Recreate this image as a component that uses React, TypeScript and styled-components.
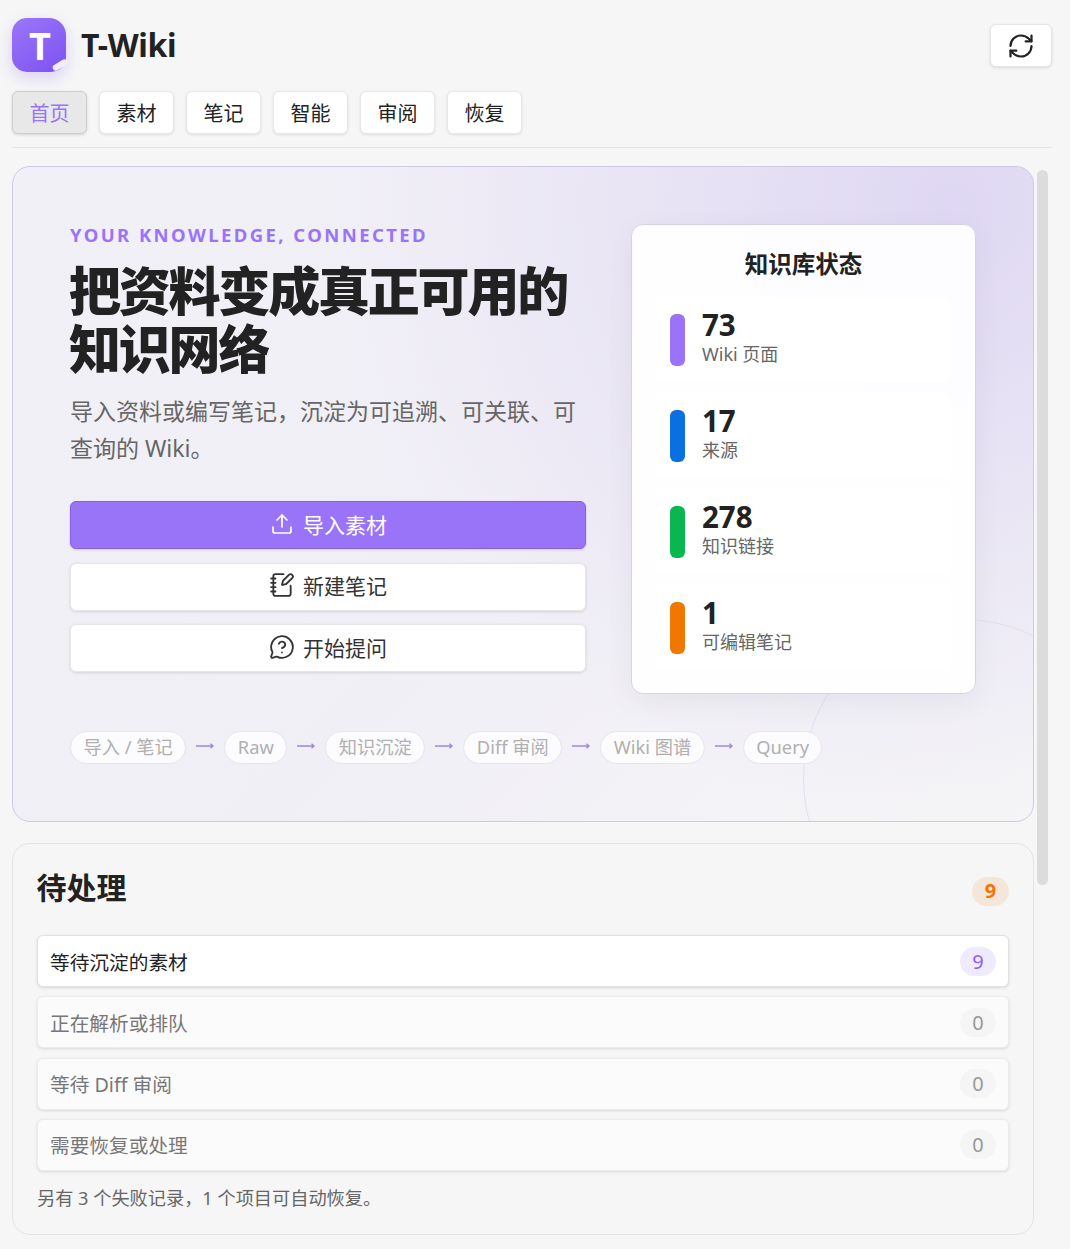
import { Fragment } from "react";
import styled, { createGlobalStyle } from "styled-components";
import { MessageCircleQuestion, NotebookPen, RefreshCw, Upload } from "lucide-react";

const GlobalStyle = createGlobalStyle`
  html, body {
    margin: 0;
    height: 100%;
    overflow: hidden;
    background: #f6f6f6;
  }
  * {
    box-sizing: border-box;
  }
  body {
    font-family: "Noto Sans", "Noto Sans CJK SC", sans-serif;
    color: #222;
  }
`;

const Page = styled.div`
  height: 1249px;
  padding: 0 12px 0 12px;
  display: flex;
  flex-direction: column;
  overflow: hidden;
`;

const Header = styled.header`
  flex: none;
  padding: 18px 6px 0 0;
  height: 91px;
  display: flex;
  align-items: flex-start;
  justify-content: space-between;
`;

const Brand = styled.div`
  display: flex;
  align-items: center;
  gap: 15px;
`;

const Logo = styled.div`
  position: relative;
  width: 54px;
  height: 54px;
  border-radius: 15px 17px 15px 15px;
  background: linear-gradient(145deg, #9b76f9, #7d52f2);
  box-shadow: 0 6px 16px rgba(125, 82, 242, 0.22);
  color: #fff;
  font-size: 38px;
  font-weight: 700;
  line-height: 54px;
  padding-left: 17px;
`;

const LogoFold = styled.span`
  position: absolute;
  right: -2px;
  bottom: 4px;
  width: 16px;
  height: 6px;
  background: #f3eefe;
  border-radius: 3px;
  transform: rotate(-32deg);
`;

const BrandName = styled.h1`
  margin: 0;
  font-size: 32px;
  font-weight: 700;
  letter-spacing: -0.35px;
  color: #222;
  line-height: 54px;
`;

const RefreshButton = styled.button`
  width: 62px;
  height: 43px;
  margin-top: 6px;
  border: 1px solid #e6e6e6;
  border-radius: 6px;
  background: #fff;
  box-shadow: 0 1px 3px rgba(0, 0, 0, 0.12);
  display: flex;
  align-items: center;
  justify-content: center;
  color: #222;
  padding: 0;
`;

const Tabs = styled.nav`
  flex: none;
  display: flex;
  gap: 12px;
  padding-bottom: 13px;
  margin-right: 6px;
  border-bottom: 1px solid #e4e4e4;
`;

const Tab = styled.button<{ $active?: boolean }>`
  width: 75px;
  height: 43px;
  padding: 0;
  border-radius: 6px;
  font: inherit;
  font-size: 20px;
  color: ${(p) => (p.$active ? "#9a74f8" : "#222")};
  background: ${(p) => (p.$active ? "#e8e8e8" : "#fff")};
  border: 1px solid ${(p) => (p.$active ? "#cfcfcf" : "#e8e8e8")};
  box-shadow: 0 1px 3px rgba(0, 0, 0, ${(p) => (p.$active ? 0.14 : 0.1)});
`;

const Body = styled.div`
  flex: 1;
  min-height: 0;
  margin-top: 18px;
  display: flex;
  overflow: hidden;
`;

const Content = styled.main`
  width: 1022px;
  flex: none;
  display: flex;
  flex-direction: column;
  gap: 21px;
`;

const ScrollRail = styled.div`
  width: 11px;
  margin-left: 3px;
  padding-top: 4px;
`;

const ScrollThumb = styled.div`
  height: 715px;
  border-radius: 6px;
  background: #dcdcdc;
`;

const Hero = styled.section`
  position: relative;
  overflow: hidden;
  height: 656px;
  padding: 56px 57px 0;
  border: 1px solid #cfc9e8;
  border-radius: 18px;
  background:
    radial-gradient(circle at 92% 6%, rgba(222, 214, 243, 0.95) 0, rgba(226, 220, 243, 0.55) 28%, rgba(226, 220, 243, 0) 55%),
    linear-gradient(135deg, #f1f0f6 0%, #f1eff6 55%, #f5f5f6 100%);
`;

const HeroCircle = styled.div`
  position: absolute;
  right: -90px;
  bottom: -118px;
  width: 320px;
  height: 320px;
  border-radius: 50%;
  border: 1px solid #e2dff2;
`;

const HeroGrid = styled.div`
  position: relative;
  display: flex;
  align-items: flex-start;
  justify-content: space-between;
`;

const HeroText = styled.div`
  width: 516px;
`;

const Eyebrow = styled.div`
  font-size: 18.5px;
  line-height: 24px;
  font-weight: 700;
  letter-spacing: 2.42px;
  color: #9a74f8;
`;

const HeroTitle = styled.h2`
  margin: 15px 0 0 -1px;
  font-size: 52px;
  line-height: 58px;
  font-weight: 800;
  letter-spacing: -2.2px;
  color: #222;
`;

const HeroDesc = styled.p`
  margin: 15px 0 0;
  font-size: 23px;
  line-height: 37px;
  color: #666;
`;

const Actions = styled.div`
  margin-top: 34px;
  display: flex;
  flex-direction: column;
  gap: 13.5px;
`;

const ActionButton = styled.button<{ $primary?: boolean }>`
  height: 48px;
  width: 100%;
  padding: 0 0 3px;
  border-radius: 6px;
  font: inherit;
  font-size: 21px;
  display: flex;
  align-items: center;
  justify-content: center;
  gap: 8px;
  color: ${(p) => (p.$primary ? "#fff" : "#333")};
  background: ${(p) => (p.$primary ? "#9a74f8" : "#fff")};
  border: 1px solid ${(p) => (p.$primary ? "#8660e0" : "#e6e6e6")};
  box-shadow: 0 1px 3px rgba(0, 0, 0, 0.12);
`;

const UploadIcon = styled(Upload)`
  margin: 0 1px;
`;

const StatusCard = styled.aside`
  width: 345px;
  height: 470px;
  margin-top: 1px;
  padding: 21px 24px 0;
  border: 1px solid #d6d3e6;
  border-radius: 12px;
  background: rgba(255, 255, 255, 0.93);
  box-shadow: 0 8px 30px rgba(0, 0, 0, 0.05);
`;

const StatusTitle = styled.h3`
  margin: 0 0 15px;
  text-align: center;
  font-size: 23.5px;
  line-height: 36px;
  font-weight: 700;
  color: #222;
`;

const StatRow = styled.div`
  height: 85px;
  margin-bottom: 11px;
  padding: 0 14px;
  border-radius: 8px;
  background: #fff;
  display: flex;
  align-items: center;
  gap: 17px;
`;

const StatBar = styled.span<{ $color: string }>`
  flex: none;
  width: 15px;
  height: 52px;
  border-radius: 6px;
  background: ${(p) => p.$color};
`;

const StatText = styled.div`
  margin-bottom: 6px;
`;

const StatValue = styled.div`
  font-size: 29.5px;
  line-height: 34px;
  font-weight: 700;
  color: #222;
`;

const StatLabel = styled.div`
  font-size: 18px;
  line-height: 24px;
  color: #666;
`;

const Flow = styled.div`
  position: relative;
  margin-top: 37px;
  display: flex;
  align-items: center;
  gap: 10.1px;
`;

const FlowPill = styled.span`
  height: 33px;
  padding: 0 12.4px;
  border: 1px solid #e6e6ea;
  border-radius: 17px;
  background: rgba(255, 255, 255, 0.75);
  color: #b0b0b0;
  font-size: 18.3px;
  line-height: 29px;
  white-space: nowrap;
`;

const FlowArrow = () => (
  <svg width="18" height="8" viewBox="0 0 18 8" fill="none" style={{ marginTop: -4 }}>
    <path d="M0 4H17M14.5 1.8L17 4L14.5 6.2" stroke="#a387e0" strokeWidth="1.4" />
  </svg>
);

const Panel = styled.section`
  height: 392px;
  padding: 0 24px;
  border: 1px solid #e4e4e6;
  border-radius: 18px;
`;

const PanelHead = styled.div`
  height: 91px;
  display: flex;
  align-items: center;
  justify-content: space-between;
`;

const PanelTitle = styled.h3`
  margin: 0 0 8px -0.5px;
  font-size: 30px;
  font-weight: 700;
  color: #222;
`;

const WarnBadge = styled.span`
  width: 37px;
  height: 29px;
  margin-top: 3px;
  border-radius: 15px;
  background: #f5e6da;
  color: #f07800;
  font-size: 20px;
  font-weight: 700;
  line-height: 28px;
  text-align: center;
`;

const QueueList = styled.div`
  display: flex;
  flex-direction: column;
  gap: 9.3px;
`;

const QueueRow = styled.div<{ $active?: boolean }>`
  height: 52px;
  padding: 0 12px;
  border: 1px solid ${(p) => (p.$active ? "#e2e2e2" : "#ececec")};
  border-radius: 6px;
  background: ${(p) => (p.$active ? "#fff" : "#fbfbfb")};
  box-shadow: 0 1px 3px rgba(0, 0, 0, 0.12);
  display: flex;
  align-items: center;
  justify-content: space-between;
  font-size: 19.7px;
  color: ${(p) => (p.$active ? "#222" : "#777")};
`;

const QueueCount = styled.span<{ $active?: boolean }>`
  width: 36px;
  height: 29px;
  border-radius: 15px;
  background: ${(p) => (p.$active ? "#f0eaff" : "#f5f5f5")};
  color: ${(p) => (p.$active ? "#8a62f5" : "#999")};
  font-size: 20px;
  line-height: 29px;
  text-align: center;
`;

const PanelNote = styled.p`
  margin: 14px 0 0;
  font-size: 18.2px;
  line-height: 26px;
  color: #666;
`;

const tabs = ["首页", "素材", "笔记", "智能", "审阅", "恢复"];

const stats = [
  { value: "73", label: "Wiki 页面", color: "#9a74f8" },
  { value: "17", label: "来源", color: "#0a6fe0" },
  { value: "278", label: "知识链接", color: "#0ab650" },
  { value: "1", label: "可编辑笔记", color: "#f07800" },
];

const flow = ["导入 / 笔记", "Raw", "知识沉淀", "Diff 审阅", "Wiki 图谱", "Query"];

const queue = [
  { label: "等待沉淀的素材", count: 9 },
  { label: "正在解析或排队", count: 0 },
  { label: "等待 Diff 审阅", count: 0 },
  { label: "需要恢复或处理", count: 0 },
];

export default function App() {
  return (
    <>
      <GlobalStyle />
      <Page>
        <Header>
          <Brand>
            <Logo>
              T
              <LogoFold />
            </Logo>
            <BrandName>T-Wiki</BrandName>
          </Brand>
          <RefreshButton aria-label="刷新">
            <RefreshCw size={28} strokeWidth={1.9} />
          </RefreshButton>
        </Header>
        <Tabs>
          {tabs.map((t, i) => (
            <Tab key={t} $active={i === 0}>
              {t}
            </Tab>
          ))}
        </Tabs>
        <Body>
          <Content>
            <Hero>
              <HeroCircle />
              <HeroGrid>
                <HeroText>
                  <Eyebrow>YOUR KNOWLEDGE, CONNECTED</Eyebrow>
                  <HeroTitle>
                    把资料变成真正可用的
                    <br />
                    知识网络
                  </HeroTitle>
                  <HeroDesc>导入资料或编写笔记，沉淀为可追溯、可关联、可查询的 Wiki。</HeroDesc>
                  <Actions>
                    <ActionButton $primary>
                      <UploadIcon size={24} strokeWidth={1.7} />
                      导入素材
                    </ActionButton>
                    <ActionButton>
                      <NotebookPen size={26} strokeWidth={1.7} />
                      新建笔记
                    </ActionButton>
                    <ActionButton>
                      <MessageCircleQuestion size={26} strokeWidth={1.7} />
                      开始提问
                    </ActionButton>
                  </Actions>
                </HeroText>
                <StatusCard>
                  <StatusTitle>知识库状态</StatusTitle>
                  {stats.map((s) => (
                    <StatRow key={s.label}>
                      <StatBar $color={s.color} />
                      <StatText>
                        <StatValue>{s.value}</StatValue>
                        <StatLabel>{s.label}</StatLabel>
                      </StatText>
                    </StatRow>
                  ))}
                </StatusCard>
              </HeroGrid>
              <Flow>
                {flow.map((f, i) => (
                  <Fragment key={f}>
                    {i > 0 && <FlowArrow />}
                    <FlowPill>{f}</FlowPill>
                  </Fragment>
                ))}
              </Flow>
            </Hero>
            <Panel>
              <PanelHead>
                <PanelTitle>待处理</PanelTitle>
                <WarnBadge>9</WarnBadge>
              </PanelHead>
              <QueueList>
                {queue.map((q) => (
                  <QueueRow key={q.label} $active={q.count > 0}>
                    {q.label}
                    <QueueCount $active={q.count > 0}>{q.count}</QueueCount>
                  </QueueRow>
                ))}
              </QueueList>
              <PanelNote>另有 3 个失败记录，1 个项目可自动恢复。</PanelNote>
            </Panel>
          </Content>
          <ScrollRail>
            <ScrollThumb />
          </ScrollRail>
        </Body>
      </Page>
    </>
  );
}
